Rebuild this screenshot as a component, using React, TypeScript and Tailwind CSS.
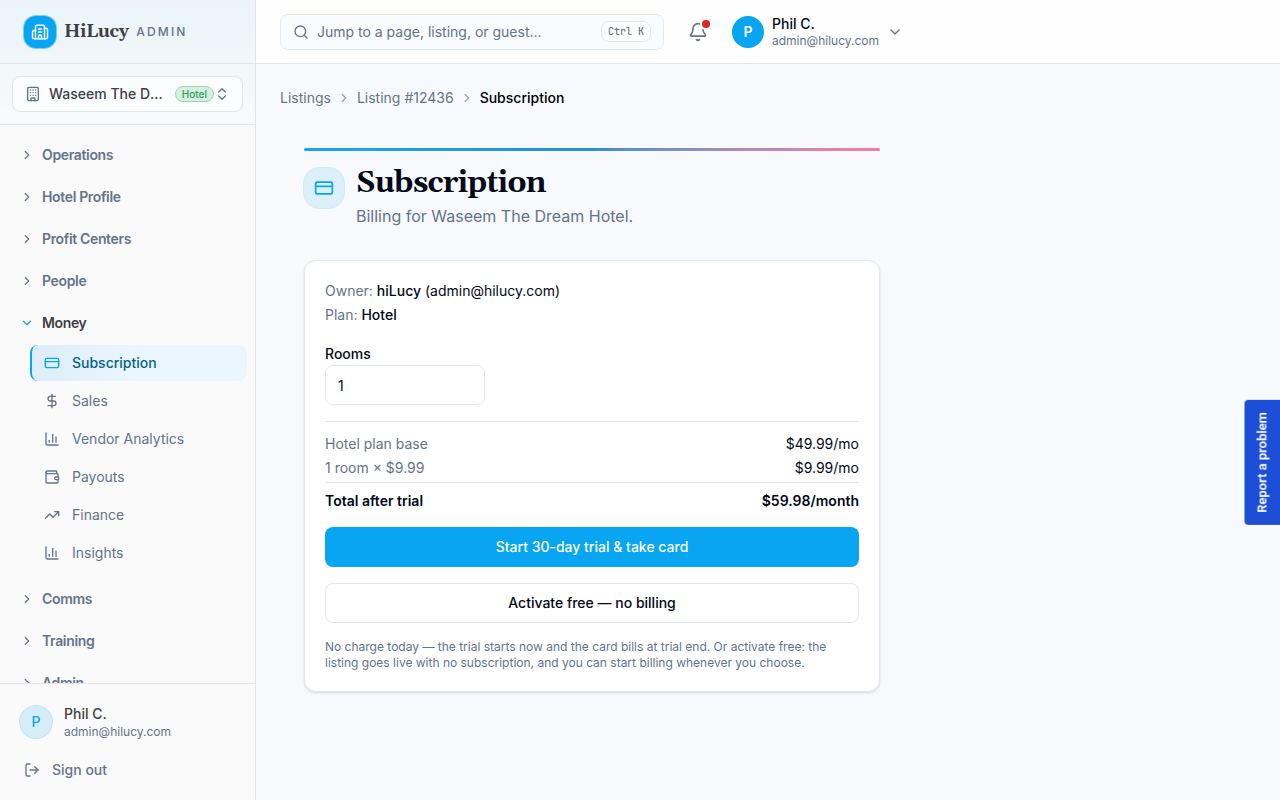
import { useState } from 'react';
import {
  Bell,
  Building,
  Building2,
  ChartColumn,
  ChevronDown,
  ChevronRight,
  ChevronsUpDown,
  CreditCard,
  DollarSign,
  LogOut,
  Search,
  TrendingUp,
  Wallet,
  type LucideIcon,
} from 'lucide-react';
import { clsx } from 'clsx';

type NavItem = { label: string; icon: LucideIcon };
type NavGroup = { label: string; items?: NavItem[] };

const groups: NavGroup[] = [
  { label: 'Operations' },
  { label: 'Hotel Profile' },
  { label: 'Profit Centers' },
  { label: 'People' },
  {
    label: 'Money',
    items: [
      { label: 'Subscription', icon: CreditCard },
      { label: 'Sales', icon: DollarSign },
      { label: 'Vendor Analytics', icon: ChartColumn },
      { label: 'Payouts', icon: Wallet },
      { label: 'Finance', icon: TrendingUp },
      { label: 'Insights', icon: ChartColumn },
    ],
  },
  { label: 'Comms' },
  { label: 'Training' },
  { label: 'Admin' },
];

const BASE_PRICE = 49.99;
const ROOM_PRICE = 9.99;

function Sidebar() {
  const [openGroup, setOpenGroup] = useState('Money');

  return (
    <aside className="flex w-64 shrink-0 flex-col border-r border-[#e4e4e7] bg-[#fafafa] bg-linear-to-b from-[#eaf4fa] to-[#fafafa] to-[140px]">
      <div className="flex h-16 shrink-0 items-center gap-2 border-b border-[#e2e6ea] px-6">
        <span className="flex size-8 items-center justify-center rounded-xl bg-[#07a5f2] text-white ring-1 ring-[#07a5f2]/50">
          <Building2 size={18} />
        </span>
        <span className="font-[Gelasio,Georgia,'Liberation_Serif',serif] text-lg font-bold tracking-tight text-[#3f3f46]">HiLucy</span>
        <span className="text-xs font-medium tracking-[0.18em] text-[#64748b]">ADMIN</span>
      </div>

      <div className="shrink-0 border-b border-[#e4e4e7] p-3">
        <button className="flex h-9 w-full items-center rounded-lg border border-[#e4e4e7] bg-white/60 px-3 text-sm font-medium text-[#3f3f46]">
          <Building size={16} className="mr-2 shrink-0 text-[#64748b]" />
          <span className="min-w-0 flex-1 truncate text-left">Waseem The Dream Hotel</span>
          <span className="ml-3 rounded-full border border-[#9fd6b3] bg-[#d8eee0] px-1.5 text-[10px] leading-[14px] font-medium text-[#2e9e58]">
            Hotel
          </span>
          <ChevronsUpDown size={16} className="shrink-0 text-[#64748b]" />
        </button>
      </div>

      <nav className="flex min-h-0 flex-1 flex-col gap-1.5 overflow-hidden px-2 pt-3">
        {groups.map((group) => {
          const open = group.label === openGroup;
          return (
            <div key={group.label} className="shrink-0">
              <button
                onClick={() => setOpenGroup(open ? '' : group.label)}
                aria-expanded={open}
                className={clsx(
                  'flex h-9 w-full items-center gap-2 px-3 text-sm font-semibold tracking-tight',
                  open ? 'text-[#3f3f46]' : 'text-[#64748b]',
                )}
              >
                {open ? (
                  <ChevronDown size={14} className="text-[#07a5f2]" />
                ) : (
                  <ChevronRight size={14} />
                )}
                {group.label}
              </button>
              {open && group.items && (
                <ul className="flex flex-col gap-0.5 py-1 pl-[22px]">
                  {group.items.map(({ label, icon: Icon }, i) => (
                    <li key={label}>
                      <a
                        href="#"
                        className={clsx(
                          'flex h-9 items-center gap-3 rounded-lg border-l-2 px-3 text-sm',
                          i === 0
                            ? 'border-[#07a5f2] bg-linear-to-r from-[#dcedf9] to-[#ebf7fe] to-50% font-medium text-[#075f8f]'
                            : 'border-transparent text-[#64748b]',
                        )}
                      >
                        <Icon size={16} className={i === 0 ? 'text-[#07a5f2]' : ''} />
                        {label}
                      </a>
                    </li>
                  ))}
                </ul>
              )}
            </div>
          );
        })}
      </nav>

      <div className="shrink-0 border-t border-[#e4e4e7] p-3">
        <div className="flex items-center gap-3 p-2">
          <span className="flex size-8 items-center justify-center rounded-full bg-[#d6edf9] text-sm font-medium text-[#07a5f2] ring-1 ring-[#bfe5f7]">
            P
          </span>
          <div>
            <p className="text-sm font-medium text-[#3f3f46]">Phil C.</p>
            <p className="text-xs text-[#64748b]">admin@hilucy.com</p>
          </div>
        </div>
        <button className="mt-1 flex h-9 w-full items-center gap-3 px-3 text-sm font-medium text-[#64748b]">
          <LogOut size={16} />
          Sign out
        </button>
      </div>
    </aside>
  );
}

function TopBar() {
  return (
    <header className="flex h-16 shrink-0 items-center border-b border-[#e2e8f0] bg-[#fefefe] px-6">
      <label className="flex h-9 w-full max-w-96 items-center gap-2 rounded-lg border border-[#e2e8f0] bg-[#fafbfd] px-3 text-[#64748b]">
        <Search size={16} className="shrink-0" />
        <input
          type="search"
          aria-label="Search"
          placeholder="Jump to a page, listing, or guest..."
          className="min-w-0 flex-1 bg-transparent text-sm outline-none placeholder:text-[#64748b]"
        />
        <kbd className="rounded-lg border border-[#e2e8f0] bg-white px-1.5 py-[3px] font-['JetBrains_Mono','Liberation_Mono',monospace] text-[10px] leading-[13px] font-medium">
          Ctrl K
        </kbd>
      </label>

      <button aria-label="Notifications" className="relative ml-4 flex size-9 shrink-0 items-center justify-center text-[#64748b]">
        <Bell size={20} />
        <span className="absolute top-1.5 right-1.5 size-2 rounded-full bg-[#dc2626] ring-2 ring-[#fefefe]" />
      </button>

      <button className="ml-4 flex items-center gap-2 text-left">
        <span className="flex size-8 items-center justify-center rounded-full bg-[#07a5f2] text-sm font-semibold text-white">
          P
        </span>
        <span>
          <span className="block text-sm leading-[18px] font-medium text-[#020817]">Phil C.</span>
          <span className="block text-xs leading-4 text-[#64748b]">admin@hilucy.com</span>
        </span>
        <ChevronDown size={16} className="text-[#64748b]" />
      </button>
    </header>
  );
}

function SubscriptionCard() {
  const [rooms, setRooms] = useState(1);
  const roomTotal = rooms * ROOM_PRICE;

  return (
    <section className="flex flex-col gap-4 rounded-xl border border-[#e2e8f0] bg-white p-5 text-sm shadow-sm">
      <div className="space-y-1">
        <p>
          <span className="text-[#64748b]">Owner:</span> <span className="font-medium">hiLucy</span> (admin@hilucy.com)
        </p>
        <p>
          <span className="text-[#64748b]">Plan:</span> <span className="font-medium">Hotel</span>
        </p>
      </div>

      <div className="text-base">
        <label htmlFor="rooms" className="text-sm font-medium">
          Rooms
        </label>
        <input
          id="rooms"
          type="number"
          min={1}
          value={rooms}
          onChange={(e) => setRooms(Number(e.target.value))}
          className="block h-10 w-40 rounded-lg border border-[#e2e8f0] bg-white px-3 text-sm"
        />
      </div>

      <dl className="space-y-1 border-t border-[#e2e8f0] pt-3">
        <div className="flex justify-between">
          <dt className="text-[#64748b]">Hotel plan base</dt>
          <dd>${BASE_PRICE.toFixed(2)}/mo</dd>
        </div>
        <div className="flex justify-between">
          <dt className="text-[#64748b]">
            {rooms} room{rooms === 1 ? '' : 's'} × ${ROOM_PRICE}
          </dt>
          <dd>${roomTotal.toFixed(2)}/mo</dd>
        </div>
        <div className="flex justify-between border-t border-[#e2e8f0] pt-2 font-semibold">
          <dt>Total after trial</dt>
          <dd>${(BASE_PRICE + roomTotal).toFixed(2)}/month</dd>
        </div>
      </dl>

      <button className="h-10 rounded-lg bg-[#07a5f2] font-medium text-white">Start 30-day trial & take card</button>
      <button className="h-10 rounded-lg border border-[#e2e8f0] bg-white font-medium">
        Activate free — no billing
      </button>

      <p className="text-xs text-[#64748b]">
        No charge today — the trial starts now and the card bills at trial end. Or activate free: the listing goes live
        with no subscription, and you can start billing whenever you choose.
      </p>
    </section>
  );
}

export default function App() {
  return (
    <div className="flex h-screen bg-[#f8f9fd] font-[Inter,sans-serif] text-[#020817]">
      <Sidebar />

      <div className="flex min-w-0 flex-1 flex-col">
        <TopBar />

        <main className="flex-1 overflow-auto p-6">
          <nav aria-label="Breadcrumb" className="mb-4 flex items-center gap-1.5 text-sm text-[#64748b]">
            <a href="#">Listings</a>
            <ChevronRight size={14} className="text-[#94a3b8]" />
            <a href="#">Listing #12436</a>
            <ChevronRight size={14} className="text-[#94a3b8]" />
            <span aria-current="page" className="font-medium text-black">Subscription</span>
          </nav>

          <div className="max-w-2xl p-6">
            <div className="max-w-xl">
              <div className="h-[3px] rounded-full bg-linear-to-r from-[#12a9f4] via-[#2590cb] to-[#fb7a9f]" />
              <div className="mt-4 mb-8 flex gap-3">
                <span className="mt-px flex size-10 shrink-0 items-center justify-center rounded-2xl bg-[#dcf0fa] text-[#07a5f2] ring-1 ring-[#d0eaf7]">
                  <CreditCard size={20} />
                </span>
                <div>
                  <h1 className="mb-1 font-[Gelasio,Georgia,'Liberation_Serif',serif] text-3xl leading-[33px] font-bold tracking-tight">
                    Subscription
                  </h1>
                  <p className="text-base text-[#64748b]">Billing for Waseem The Dream Hotel.</p>
                </div>
              </div>
              <SubscriptionCard />
            </div>
          </div>
        </main>
      </div>

      {/* Feedback tab pinned to the window edge */}
      <button className="fixed top-1/2 right-0 rotate-180 rounded-r bg-[#1d4ed8] px-3 py-2 font-[Roboto,sans-serif] text-[13px] font-semibold text-white [writing-mode:vertical-rl]">
        Report a problem
      </button>
    </div>
  );
}
